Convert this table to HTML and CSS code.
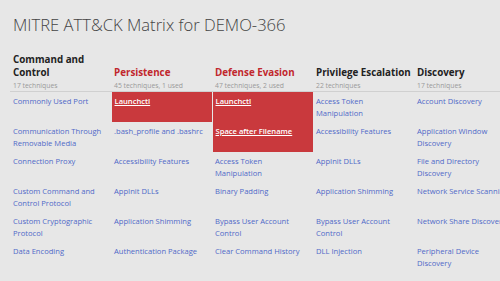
FILE: index.html
```html
<!DOCTYPE html>
<html>
<head>
<meta charset="utf-8">
<link rel="stylesheet" href="styles.css">
</head>
<body>
<h1 class="title">MITRE ATT&amp;CK Matrix for DEMO-366</h1>
<table class="matrix">
  <thead>
    <tr>
      <th><div class="tactic">Command and Control</div><div class="count">17 techniques</div></th>
      <th class="used"><div class="tactic">Persistence</div><div class="count">45 techniques, 1 used</div></th>
      <th class="used"><div class="tactic">Defense Evasion</div><div class="count">47 techniques, 2 used</div></th>
      <th><div class="tactic">Privilege Escalation</div><div class="count">22 techniques</div></th>
      <th><div class="tactic">Discovery</div><div class="count">17 techniques</div></th>
    </tr>
  </thead>
  <tbody>
    <tr>
      <td><a>Commonly Used Port</a></td>
      <td class="hit"><a>Launchctl</a></td>
      <td class="hit"><a>Launchctl</a></td>
      <td><a>Access Token Manipulation</a></td>
      <td><a>Account Discovery</a></td>
    </tr>
    <tr>
      <td><a>Communication Through Removable Media</a></td>
      <td><a>.bash_profile and .bashrc</a></td>
      <td class="hit"><a>Space after Filename</a></td>
      <td><a>Accessibility Features</a></td>
      <td><a>Application Window Discovery</a></td>
    </tr>
    <tr>
      <td><a>Connection Proxy</a></td>
      <td><a>Accessibility Features</a></td>
      <td><a>Access Token Manipulation</a></td>
      <td><a>AppInit DLLs</a></td>
      <td><a>File and Directory Discovery</a></td>
    </tr>
    <tr>
      <td><a>Custom Command and Control Protocol</a></td>
      <td><a>AppInit DLLs</a></td>
      <td><a>Binary Padding</a></td>
      <td><a>Application Shimming</a></td>
      <td><a class="nowrap">Network Service Scanning</a></td>
    </tr>
    <tr>
      <td><a>Custom Cryptographic Protocol</a></td>
      <td><a>Application Shimming</a></td>
      <td><a>Bypass User Account Control</a></td>
      <td><a>Bypass User Account Control</a></td>
      <td><a class="nowrap">Network Share Discovery</a></td>
    </tr>
    <tr>
      <td><a>Data Encoding</a></td>
      <td><a>Authentication Package</a></td>
      <td><a>Clear Command History</a></td>
      <td><a>DLL Injection</a></td>
      <td><a>Peripheral Device Discovery</a></td>
    </tr>
  </tbody>
</table>
</body>
</html>
```

FILE: styles.css
```css
html, body {
  margin: 0;
  padding: 0;
  background: #e7e7e7;
  overflow: hidden;
  width: 500px;
  height: 281px;
}
body {
  font-family: "Open Sans", "Liberation Sans", sans-serif;
  color: #333;
}
.title {
  margin: 0;
  padding: 14px 0 0 13px;
  font-size: 16.6px;
  font-weight: 300;
  line-height: 22px;
  color: #444;
  white-space: nowrap;
}
.matrix {
  margin: 17px 0 0 10px;
  border-collapse: collapse;
  table-layout: fixed;
  width: 505px;
}
.matrix th {
  width: 95px;
  text-align: left;
  vertical-align: bottom;
  padding: 0 3px 0 3px;
  border-bottom: 1px solid #d0d0d0;
}
.tactic {
  font-size: 9.8px;
  font-weight: 700;
  line-height: 13px;
  color: #222;
}
.used .tactic {
  color: #c1272d;
}
.count {
  font-size: 6.8px;
  font-weight: 400;
  line-height: 10px;
  color: #9a9a9a;
  margin-top: 2px;
  white-space: nowrap;
}
.matrix td {
  vertical-align: top;
  padding: 3px;
  height: 24px;
  font-size: 7.6px;
  line-height: 12px;
}
.matrix td a {
  color: #5069c8;
  cursor: pointer;
}
.matrix td a.nowrap {
  white-space: nowrap;
}
.matrix td.hit {
  background: #c9393d;
  border-left: 1px solid #e7e7e7;
}
.matrix td.hit a {
  color: #fff;
  font-weight: 600;
  text-decoration: underline;
}
```
